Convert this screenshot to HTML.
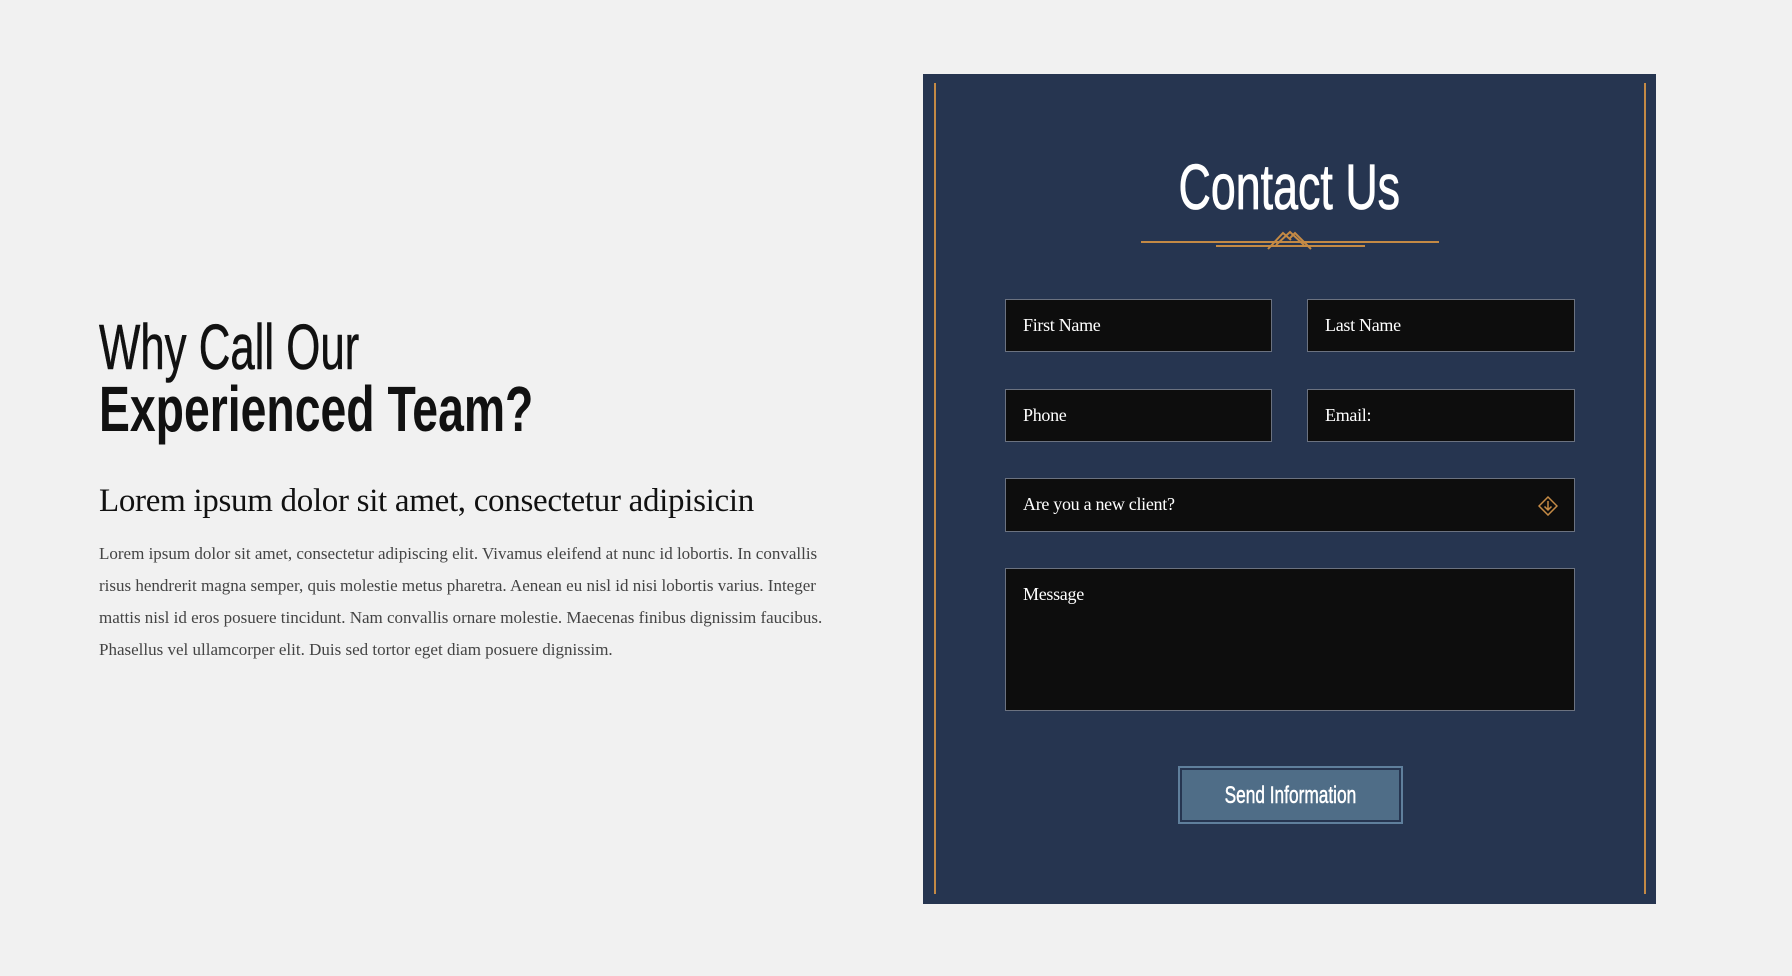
<!DOCTYPE html>
<html><head><meta charset="utf-8"><style>
*{margin:0;padding:0;box-sizing:border-box}
body{width:1792px;height:976px;background:#f1f1f1;position:relative;overflow:hidden;font-family:"Liberation Serif",serif}
.abs{position:absolute;white-space:nowrap}
.cond{font-family:"Liberation Sans",sans-serif;transform-origin:0 0;display:inline-block}
.panel{position:absolute;left:923px;top:74px;width:733px;height:830px;background:#263550}
.gl{position:absolute;top:9px;width:2px;height:811px;background:#c48a45}
.f{position:absolute;background:#0d0d0d;border:1px solid #6b7280;color:#fff;font-size:18px;padding:15px 0 0 17px;letter-spacing:-0.3px}
</style></head><body>
<div class="abs" style="left:99px;top:310px"><span class="cond" style="font-size:64px;color:#111;transform:scaleX(0.684);-webkit-text-stroke:0.6px #111">Why Call Our</span></div>
<div class="abs" style="left:99px;top:372px"><span class="cond" style="font-size:64px;font-weight:bold;color:#111;transform:scaleX(0.724)">Experienced Team?</span></div>
<div class="abs" style="left:99px;top:483px;font-size:33px;color:#111;letter-spacing:-0.3px">Lorem ipsum dolor sit amet, consectetur adipisicin</div>
<div class="abs" style="left:99px;top:538px;font-size:17px;line-height:32px;color:#444;letter-spacing:0px">Lorem ipsum dolor sit amet, consectetur adipiscing elit. Vivamus eleifend at nunc id lobortis. In convallis<br>risus hendrerit magna semper, quis molestie metus pharetra. Aenean eu nisl id nisi lobortis varius. Integer<br>mattis nisl id eros posuere tincidunt. Nam convallis ornare molestie. Maecenas finibus dignissim faucibus.<br>Phasellus vel ullamcorper elit. Duis sed tortor eget diam posuere dignissim.</div>
<div class="panel">
<div class="gl" style="left:11px"></div><div class="gl" style="left:721px"></div>
<div class="abs" style="left:0;width:733px;top:76px;text-align:center"><span class="cond" style="font-size:64px;color:#fff;transform:scaleX(0.7);transform-origin:50% 0;-webkit-text-stroke:0.8px #fff">Contact Us</span></div>
<svg class="abs" style="left:0;top:150px" width="733" height="30" viewBox="923 224 733 30">
<g stroke="#c48a45" stroke-width="2" fill="none">
<line x1="1141" y1="242" x2="1439" y2="242"/>
<line x1="1216" y1="246" x2="1365" y2="246"/>
<polyline points="1268,249 1283,233 1291,240"/>
<polyline points="1290,238 1295,233 1311,249"/>
<polyline points="1276,245 1290,232 1304,245"/>
</g></svg>
<div class="f" style="left:82px;top:225px;width:267px;height:53px">First Name</div>
<div class="f" style="left:384px;top:225px;width:268px;height:53px">Last Name</div>
<div class="f" style="left:82px;top:315px;width:267px;height:53px">Phone</div>
<div class="f" style="left:384px;top:315px;width:268px;height:53px">Email:</div>
<div class="f" style="left:82px;top:404px;width:570px;height:54px">Are you a new client?
<svg style="position:absolute;right:16px;top:17px" width="20" height="20" viewBox="0 0 20 20"><g stroke="#c48a45" stroke-width="1.5" fill="none"><path d="M10 1L19 10L10 19L1 10Z"/><path d="M10 5V14M6.5 10.5L10 14L13.5 10.5"/></g></svg></div>
<div class="f" style="left:82px;top:494px;width:570px;height:143px">Message</div>
<div style="position:absolute;left:255px;top:692px;width:225px;height:58px;border:2px solid #5f7f9c;padding:2px">
<div style="width:100%;height:100%;background:#4f6d87;text-align:center;padding-top:12px"><span class="cond" style="font-size:24px;color:#fff;transform:scaleX(0.72);transform-origin:50% 0;-webkit-text-stroke:0.5px #fff">Send Information</span></div></div>
</div>
</body></html>
